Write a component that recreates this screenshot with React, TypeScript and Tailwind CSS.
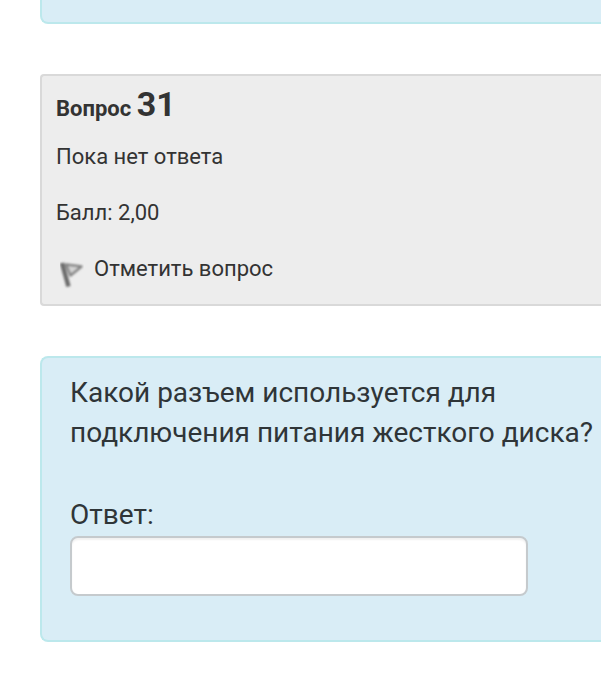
import React from 'react';

const FlagIcon = () => (
  <svg viewBox="0 0 32 32" className="w-8 h-8 shrink-0" fill="none" aria-hidden="true">
    <defs>
      <filter id="soften">
        <feGaussianBlur stdDeviation="0.8" />
      </filter>
    </defs>
    <g filter="url(#soften)">
      <path d="M10 7.5L25.5 9.5L14.5 18.5Z" fill="#d4d4d4" stroke="#858585" strokeWidth="2.5" strokeLinejoin="round" />
      <path d="M6 6L12.5 29.5" stroke="#6c6c6c" strokeWidth="4.5" />
    </g>
  </svg>
);

const QuestionInfo = () => (
  <section className="bg-[#ededed] border-2 border-r-0 border-[#d9d9d9] rounded-l-sm px-3.5 pt-2 pb-[15px] text-[22px] leading-10 text-[#333]">
    <h3 className="font-bold mb-2">
      Вопрос <span className="text-[34px] leading-10">31</span>
    </h3>
    <div className="mb-4">Пока нет ответа</div>
    <div className="mb-4">Балл: 2,00</div>
    <button type="button" className="flex items-end gap-1.5 cursor-pointer">
      <FlagIcon />
      Отметить вопрос
    </button>
  </section>
);

const QuestionForm = () => (
  <form className="bg-[#d9edf6] border-2 border-r-0 border-[#bce8ec] rounded-l-lg pl-7 pt-[15px] pb-11 text-[28px] leading-10 text-[#2f3538]">
    <p className="mb-[42px]">Какой разъем используется для подключения питания жесткого диска?</p>
    <label htmlFor="answer" className="block mb-px">Ответ:</label>
    <input
      id="answer"
      type="text"
      className="block w-full max-w-[458px] h-[60px] px-3 bg-white border-2 border-[#c5cacd] rounded-lg shadow-[inset_0_2px_2px_rgba(0,0,0,0.06)] outline-none"
    />
  </form>
);

export default function App() {
  return (
    <main className="min-h-screen bg-white pl-10 pb-12 font-[Roboto,'Liberation_Sans',sans-serif]">
      <div className="h-6 bg-[#d9edf6] border-2 border-t-0 border-r-0 border-[#bce8ec] rounded-bl-lg mb-[50px]" />
      <QuestionInfo />
      <div className="mt-[50px]">
        <QuestionForm />
      </div>
    </main>
  );
}
